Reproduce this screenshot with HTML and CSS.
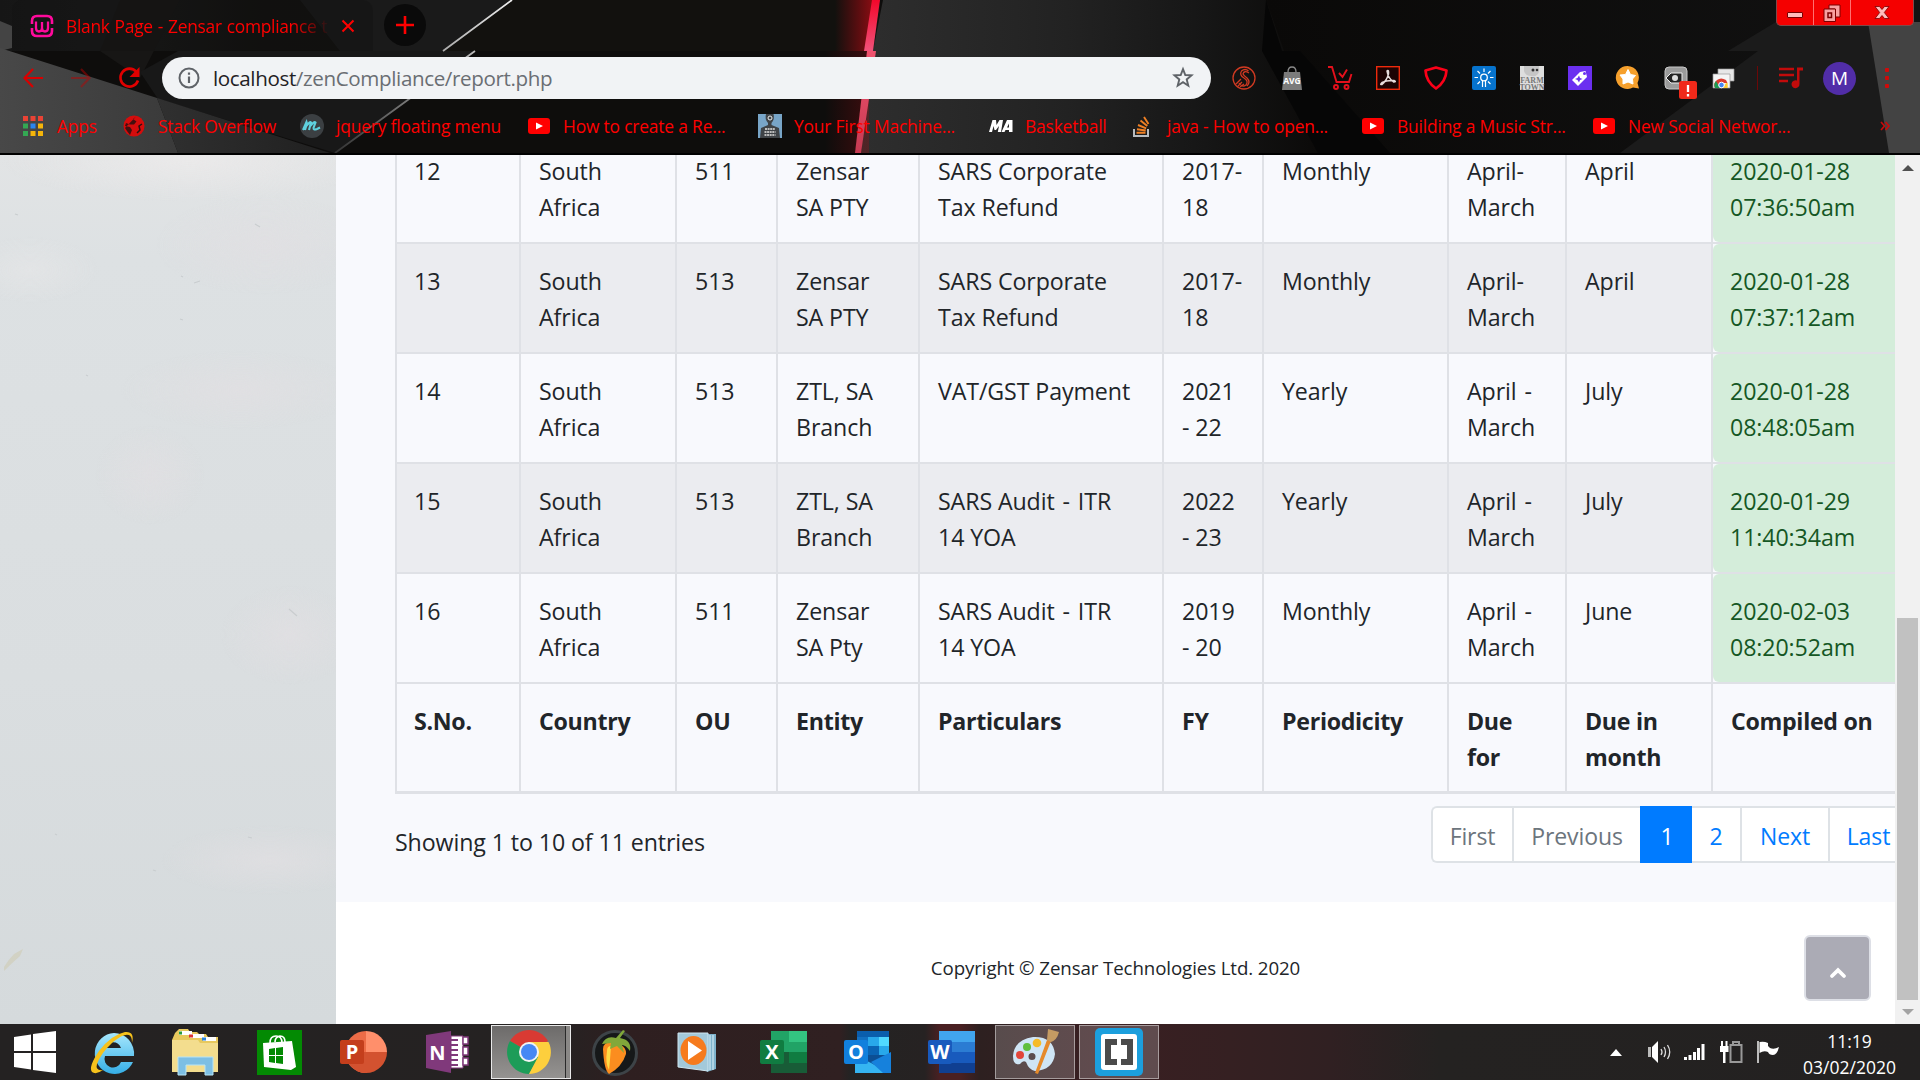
FILE: index.html
```html
<!DOCTYPE html>
<html lang="en">
<head>
<meta charset="utf-8">
<title>Blank Page - Zensar compliance tool</title>
<link rel="stylesheet" href="styles.css">
</head>
<body>
<div class="screen">
  <header class="browser">
    <svg class="theme" viewBox="0 0 1920 155" width="1920" height="155" aria-hidden="true">
      <defs>
        <linearGradient id="strip" x1="0" x2="1"><stop offset="0" stop-color="#161616"/><stop offset=".12" stop-color="#1a1a1a"/><stop offset=".2" stop-color="#161615"/><stop offset=".3" stop-color="#11100e"/><stop offset=".45" stop-color="#12110e"/></linearGradient>
        <linearGradient id="glow" x1="0" x2="1"><stop offset="0" stop-color="#a00810" stop-opacity="0"/><stop offset="1" stop-color="#a80c14" stop-opacity=".8"/></linearGradient>
        <linearGradient id="glow2" x1="0" x2="1"><stop offset="0" stop-color="#a00810" stop-opacity="0"/><stop offset="1" stop-color="#a80c14" stop-opacity=".3"/></linearGradient>
        <linearGradient id="mid" x1="0" x2="1"><stop offset="0" stop-color="#2e2e2e"/><stop offset=".45" stop-color="#222"/><stop offset=".75" stop-color="#161616"/><stop offset="1" stop-color="#0b0a09"/></linearGradient>
        <linearGradient id="beam" x1="0" x2="0" y1="0" y2="1"><stop offset="0" stop-color="#f3082b"/><stop offset="1" stop-color="#f0527a"/></linearGradient>
        <linearGradient id="beam2" x1="0" x2="0" y1="0" y2="1"><stop offset="0" stop-color="#f0526e"/><stop offset="1" stop-color="#c63a52"/></linearGradient>
        <linearGradient id="ray" x1="1" x2="0" y1="0" y2="1"><stop offset="0" stop-color="#eee"/><stop offset="1" stop-color="#333"/></linearGradient>
        <linearGradient id="slab" x1="0" x2="1"><stop offset="0" stop-color="#484848"/><stop offset="1" stop-color="#3a3a3a"/></linearGradient>
        <linearGradient id="slab2" x1="0" x2="1"><stop offset="0" stop-color="#303030"/><stop offset="1" stop-color="#202020"/></linearGradient>
        <linearGradient id="east" x1="0" x2="1"><stop offset="0" stop-color="#0a0908"/><stop offset="1" stop-color="#121212"/></linearGradient>
      </defs>
      <rect width="1920" height="155" fill="#0e0d0c"/>
      <rect width="880" height="51" fill="url(#strip)"/>
      <path d="M0 21L12 26V48L0 51Z" fill="#444"/>
      <path d="M300 0H512L443 51H340Z" fill="#1a1a1a"/>
      <path d="M120 0H180L140 78L100 51Z" fill="#171615"/>
      <path d="M178 51H475L335 153L158 99L140 72Z" fill="#181818"/>
      <path d="M0 48L157 98L178 153H0Z" fill="url(#slab)"/>
      <path d="M157 98L330 153H178Z" fill="url(#slab2)"/>
      <path d="M512 0L443 51M475 51L335 153" stroke="url(#ray)" stroke-width="1.800"/>
      <path d="M883 0H1270L1320 153H861L873 51Z" fill="url(#mid)"/>
      <rect x="835" width="38" height="51" fill="url(#glow)"/>
      <rect x="825" y="51" width="44" height="102" fill="url(#glow2)"/>
      <path d="M872 0H880L873 51H864Z" fill="url(#beam)"/>
      <path d="M867 51H876L861 153H855Z" fill="url(#beam2)"/>
      <path d="M1266 0H1920V153H1320Z" fill="url(#east)"/>
      <path d="M1266 0L1282 51H1300L1390 153H1318L1262 51Z" fill="#060606"/>
      <path d="M1776 22L1728 51H1874L1868 22ZM1758 51L1620 153H1890L1874 51Z" fill="#1b1b1b"/>
      <path d="M1868 22H1920V153H1889Z" fill="#434343"/>
      <rect y="153" width="1920" height="2" fill="#000"/>
    </svg>

    <div class="tabstrip">
      <div class="tab">
        <svg class="favicon" viewBox="0 0 24 24" width="24" height="24"><g fill="none" stroke="#ff0a9c" stroke-width="2.6"><path d="M2 10V7Q2 2 7 2H17Q22 2 22 7V10M2 14V17Q2 22 7 22H17Q22 22 22 17V14"/><path d="M6 7.500V14Q6 17.500 9 17.500Q12 17.500 12 14V8M12 14Q12 17.500 15 17.500Q18 17.500 18 14V7.500" stroke-width="2.300"/></g></svg>
        <span class="tab-title">Blank Page - Zensar compliance t</span>
        <svg class="tab-close" viewBox="0 0 14 14" width="14" height="14"><path d="M1.500 1.500L12.500 12.500M12.500 1.500L1.500 12.500" stroke="#f00" stroke-width="2"/></svg>
      </div>
      <div class="newtab"><svg viewBox="0 0 18 18" width="18" height="18"><path d="M9 0V18M0 9H18" stroke="#f00" stroke-width="2.600"/></svg></div>
      <div class="winbtns">
        <span class="wb min"><i></i></span>
        <span class="wb max"><svg viewBox="0 0 20 20" width="20" height="20"><path d="M7 2H18V14H13V6H7Z" fill="#f9a0a0" stroke="#7a0000"/><path d="M2 6H13.500V18.500H2Z" fill="#f9a0a0" stroke="#7a0000"/><path d="M6 10H9.500V14.500H6Z" fill="#f9a0a0" stroke="#7a0000" stroke-width="1.500"/></svg></span>
        <span class="wb close"><svg viewBox="0 0 16 14" width="16" height="15"><path d="M1 1H5.500L8 4L10.500 1H15L10.300 7L15 13H10.500L8 10L5.500 13H1L5.700 7Z" fill="#fbb" stroke="#700" stroke-width=".8"/></svg></span>
      </div>
    </div>

    <div class="toolbar">
      <div class="nav">
        <svg viewBox="0 0 24 24" width="24" height="24"><path d="M22 12H4M12 3L3.500 12L12 21" fill="none" stroke="#d80000" stroke-width="2.200"/></svg>
        <svg viewBox="0 0 24 24" width="24" height="24"><path d="M2 12H20M12 3L20.500 12L12 21" fill="none" stroke="#c00000" stroke-opacity=".45" stroke-width="2.200"/></svg>
        <svg viewBox="0 0 24 24" width="24" height="24"><path d="M19.500 6A9 9 0 1 0 21 14.500" fill="none" stroke="#e00000" stroke-width="2.600"/><path d="M22.500 1V11H12.500Z" fill="#e00000"/></svg>
      </div>
      <div class="omnibox">
        <svg viewBox="0 0 22 22" width="22" height="22"><circle cx="11" cy="11" r="9.500" fill="none" stroke="#5f6368" stroke-width="2"/><path d="M11 9.500V16M11 5.500V7.800" stroke="#5f6368" stroke-width="2.200"/></svg>
        <span class="url"><b>localhost</b>/zenCompliance/report.php</span>
        <svg viewBox="0 0 24 24" width="24" height="24"><path d="M12 3.200L14.300 9L20.500 9.400L15.700 13.400L17.300 19.700L12 16.200L6.700 19.700L8.300 13.400L3.500 9.400L9.700 9Z" fill="none" stroke="#5f6368" stroke-width="1.900"/></svg>
      </div>
      <div class="exts">
        <svg viewBox="0 0 24 24"><g fill="none" stroke="#d03a22" stroke-width="1.300"><circle cx="12" cy="12" r="11"/><path d="M16.500 5Q13 2 9.500 5Q7 9 12 12Q17 15 14 19Q10 22 7 17M17 7Q12 4 11 8Q12 10 15 12Q19 16 15 20M4 18L9 13M6 20L10 16M8 21L12 18"/></g></svg>
        <svg viewBox="0 0 24 24"><path d="M4 6H20L22 24H2Z" fill="#7b7b7b"/><path d="M8 6Q8 1 12 1Q16 1 16 6" fill="none" stroke="#8a8a8a" stroke-width="1.300"/><text x="12" y="17.500" class="avg">AVG</text></svg>
        <svg viewBox="0 0 24 24"><g fill="none" stroke="#e5101c" stroke-width="1.900"><path d="M0 1H4L8.500 16H21L23.500 8M11 7L14.500 11L19 3.500"/><circle cx="8" cy="21" r="2"/><circle cx="18.500" cy="21" r="2"/></g></svg>
        <svg viewBox="0 0 24 24"><rect x=".7" y=".7" width="22.600" height="22.600" fill="#1d0303" stroke="#ee2a0c" stroke-width="1.400"/><path d="M11 5Q13 3 12.500 8Q11 14 6 18.500Q3.500 19 6 16.500Q11 14 18 14.500Q21 16 17.500 16Q12 12 11 5Z" fill="none" stroke="#e8dcdc" stroke-width="1.500"/></svg>
        <svg viewBox="0 0 24 24"><path d="M12 1.500L22.500 4.500Q22 15.500 12 22.500Q2 15.500 1.500 4.500Z" fill="none" stroke="#fa0018" stroke-width="2.700" stroke-linejoin="round"/></svg>
        <svg viewBox="0 0 24 24"><rect width="24" height="24" rx="2" fill="#0673cd"/><circle cx="12" cy="11.500" r="3.300" fill="none" stroke="#fff" stroke-width="1.300"/><path d="M12 2.500V6M5.500 5L8 7.500M18.500 5L16 7.500M2.500 11.500H6M18 11.500H21.500M5.500 18L8 15.500M18.500 18L16 15.500M10.500 15V21M13.500 15V21" stroke="#fff" stroke-width="1.200"/></svg>
        <svg viewBox="0 0 24 24"><rect width="24" height="24" fill="#dedede"/><path d="M4 0H19V6Q17 11 12 10Q5 10 4 5Z" fill="#c5c5c5"/><circle cx="13" cy="4" r="1.500" fill="#333"/><circle cx="17" cy="4" r="1.300" fill="#333"/><text x="12" y="17" class="farm">FARM</text><text x="12" y="24" class="farm">TOWN</text></svg>
        <svg viewBox="0 0 24 24"><rect width="24" height="24" fill="#6b2ff0"/><path d="M17.500 5L19 11L10 20L4 14L12 6Z" fill="#fff"/><circle cx="16.500" cy="7.500" r="1.500" fill="#6b2ff0"/><path d="M11 9.500L12 12L14.500 13L12 14L11 16.500L9.500 14L7 13L9.500 12Z" fill="#6b2ff0"/></svg>
        <svg viewBox="0 0 24 24"><path d="M11.500 0A11.500 11.500 0 1 0 17 21.500L23 22.500L21.500 17A11.500 11.500 0 0 0 11.500 0Z" fill="#f6a02c"/><path d="M12 3.500L14.500 8.500L19.500 9.500L16.500 13L17 18L12 16L7 18L7 13L4 9L9.500 8.500Z" fill="#fff" stroke="#fff" stroke-linejoin="round"/></svg>
        <svg viewBox="0 0 24 24"><rect x="1" y="1" width="22" height="22" rx="4" fill="#9b9b9b" stroke="#c8c8c8"/><path d="M2 12L7 7H18V17H7Z" fill="#222" stroke="#eee"/><circle cx="11" cy="12" r="3" fill="#ddd"/><rect x="15" y="15" width="18" height="18" rx="2.500" fill="#f0291a"/><path d="M24 19V26M24 28V30.500" stroke="#fff" stroke-width="2.300"/></svg>
        <svg viewBox="0 0 24 24"><path d="M6 3H22V15H6Z" fill="#e7e7e7" stroke="#999" stroke-width=".7"/><path d="M1 8H18V22H1Z" fill="#f5f5f5" stroke="#999" stroke-width=".7"/><path d="M3 22A6.500 6.500 0 0 1 5 14Q9 11 14 14L15.500 17H10Z" fill="#dc3c30"/><path d="M3 22A6.500 6.500 0 0 1 4 15L8 22Z" fill="#1b9b51"/><path d="M11 22L14 17H15.700V22Z" fill="#fc3"/><circle cx="9.500" cy="19" r="2.800" fill="#4387f5" stroke="#fff"/></svg>
      </div>
      <i class="tb-sep"></i>
      <svg class="queue" viewBox="0 0 24 24" width="24" height="24"><path d="M0 3H15M0 9H15M0 15H9" stroke="#c20b0b" stroke-width="2.500"/><path d="M18 1.500H24V4.500H20.500V18A4 4 0 1 1 18 14.500Z" fill="#c20b0b"/></svg>
      <span class="avatar">M</span>
      <svg class="dots" viewBox="0 0 6 20" width="6" height="20"><g fill="#d00a0a"><rect x="1" y="0" width="4" height="4" rx="1"/><rect x="1" y="8" width="4" height="4" rx="1"/><rect x="1" y="16" width="4" height="4" rx="1"/></g></svg>
    </div>

    <nav class="bookmarks">
      <a class="bm bm-apps"><svg viewBox="0 0 24 24" width="24" height="24"><path d="M2 2H7V7H2ZM9.500 2H14.500V7H9.500ZM17 2H22V7H17Z" fill="#ea4335"/><path d="M2 9.500H7V14.500H2ZM2 17H7V22H2Z" fill="#34a853"/><path d="M9.500 9.500H14.500V14.500H9.500Z" fill="#2a85f0"/><path d="M17 9.500H22V14.500H17ZM9.500 17H14.500V22H9.500ZM17 17H22V22H17Z" fill="#f5b50a"/></svg><span>Apps</span></a>
      <a class="bm bm-so"><svg viewBox="0 0 24 24" width="24" height="24"><circle cx="12" cy="12" r="10.500" fill="#d50c0c"/><path d="M14 2.500L11 5L14.500 7.500L12 10.500H8L4 9L3 12L8 13L10 16L8 21L5 17L3 14Z" fill="#2a1010" opacity=".85"/><path d="M20 10L17 12L18 16L15 19" fill="none" stroke="#2a1010" stroke-width="1.500"/></svg><span>Stack Overflow</span></a>
      <a class="bm bm-jq"><svg viewBox="0 0 24 24" width="24" height="24"><circle cx="12" cy="12" r="12" fill="#3b3f42"/><path d="M3 16L6.500 8L7 9.500L5 16M6.500 12Q10 7 11 8.500L9 16M10.500 12Q14 7 15.500 8.500L13.500 14Q13.500 16.500 17 15L20 13.500" fill="none" stroke="#5fd0de" stroke-width="2.100"/></svg><span>jquery floating menu</span></a>
      <a class="bm bm-yt1"><svg viewBox="0 0 24 24" width="24" height="24"><rect x="1" y="4" width="22" height="16" rx="3" fill="#f00"/><path d="M9 8.500V15.500L16 12Z" fill="#fff"/></svg><span>How to create a Re...</span></a>
      <a class="bm bm-ml"><svg viewBox="0 0 24 24" width="24" height="24"><rect width="24" height="24" fill="#78a5c8"/><path d="M8 0H15.500Q17 5 13.500 9V11L21 14L22 24H2L3 14L10 11V9Q6.500 5 8 0Z" fill="#3f4347"/><circle cx="12" cy="4" r="2" fill="none" stroke="#eee"/><path d="M7 15H17M6.500 18H17.500M6.500 21H17.500" stroke="#bbb" stroke-width="1.800" stroke-dasharray="2 .6"/></svg><span>Your First Machine...</span></a>
      <a class="bm bm-ma"><svg viewBox="0 0 24 24" width="24" height="24"><path d="M0 18L3.500 6H7L7.500 11L10.500 6H14L12 18H8.800L10 12L7 16H5.500L4.500 12L3 18ZM12.500 18L18 6H23.500V18H20V16H16.500L15.500 18ZM18 13.500H20V9.500Z" fill="#fff"/></svg><span>Basketball</span></a>
      <a class="bm bm-java"><svg viewBox="0 0 24 24" width="24" height="24"><path d="M3 15V22H17V15" fill="none" stroke="#b8bcc0" stroke-width="2"/><path d="M5.500 18.700H14.500M6 15.200L14.700 16.500M7 11L15.200 14.300M9.500 6.500L16.300 12M13 3L17.500 10" stroke="#f08024" stroke-width="1.900"/></svg><span>java - How to open...</span></a>
      <a class="bm bm-yt2"><svg viewBox="0 0 24 24" width="24" height="24"><rect x="1" y="4" width="22" height="16" rx="3" fill="#f00"/><path d="M9 8.500V15.500L16 12Z" fill="#fff"/></svg><span>Building a Music Str...</span></a>
      <a class="bm bm-yt3"><svg viewBox="0 0 24 24" width="24" height="24"><rect x="1" y="4" width="22" height="16" rx="3" fill="#f00"/><path d="M9 8.500V15.500L16 12Z" fill="#fff"/></svg><span>New Social Networ...</span></a>
      <svg class="more" viewBox="0 0 10 10" width="10" height="10"><path d="M1 1L4.500 5L1 9M5.500 1L9 5L5.500 9" fill="none" stroke="#c60b0b" stroke-width="1.700"/></svg>
    </nav>
  </header>

  <main class="viewport">
    <aside class="wall">
      <svg viewBox="0 0 336 869" width="336" height="869" aria-hidden="true">
        <defs><radialGradient id="pink"><stop offset="0" stop-color="#e1dfe2"/><stop offset="1" stop-color="#e1dfe2" stop-opacity="0"/></radialGradient><radialGradient id="light"><stop offset="0" stop-color="#edebeb"/><stop offset="1" stop-color="#edebeb" stop-opacity="0"/></radialGradient></defs>
        <g opacity=".75"><ellipse cx="190" cy="5" rx="190" ry="42" fill="url(#light)"/><ellipse cx="30" cy="115" rx="70" ry="34" fill="url(#light)" opacity=".5"/>
        <ellipse cx="265" cy="90" rx="110" ry="50" fill="url(#pink)"/><ellipse cx="240" cy="235" rx="120" ry="40" fill="url(#pink)"/><ellipse cx="150" cy="320" rx="55" ry="50" fill="url(#pink)"/><ellipse cx="290" cy="480" rx="70" ry="50" fill="url(#pink)"/><ellipse cx="270" cy="705" rx="110" ry="35" fill="url(#pink)"/></g>
        <path d="M255 69L260 72M181 121L183 122M194 128L200 126M180 164L183 165M86 220L88 221M289 454L297 461M15 59L18 60M55 679L57 680M153 715L156 716M248 682L252 683" stroke="#c9cdcf" stroke-width="1.200"/>
        <path d="M4 812Q9 804 14 799L23 794L20 801Q12 808 4 816Z" fill="#cfccb4" opacity=".6"/>
      </svg>
    </aside>
    <section class="page">
      <div class="content">
        <table class="report">
          <colgroup><col class="c1"><col class="c2"><col class="c3"><col class="c4"><col class="c5"><col class="c6"><col class="c7"><col class="c8"><col class="c9"><col class="c10"></colgroup>
          <tbody>
            <tr><td>12</td><td>South<br>Africa</td><td>511</td><td>Zensar<br>SA PTY</td><td>SARS Corporate<br>Tax Refund</td><td>2017-<br>18</td><td>Monthly</td><td>April-<br>March</td><td>April</td><td class="done"><div>2020-01-28<br>07:36:50am</div></td></tr>
            <tr class="odd"><td>13</td><td>South<br>Africa</td><td>513</td><td>Zensar<br>SA PTY</td><td>SARS Corporate<br>Tax Refund</td><td>2017-<br>18</td><td>Monthly</td><td>April-<br>March</td><td>April</td><td class="done"><div>2020-01-28<br>07:37:12am</div></td></tr>
            <tr><td>14</td><td>South<br>Africa</td><td>513</td><td>ZTL, SA<br>Branch</td><td>VAT/GST Payment</td><td>2021<br>- 22</td><td>Yearly</td><td>April <i>-</i><br>March</td><td>July</td><td class="done"><div>2020-01-28<br>08:48:05am</div></td></tr>
            <tr class="odd"><td>15</td><td>South<br>Africa</td><td>513</td><td>ZTL, SA<br>Branch</td><td>SARS Audit <i>-</i> ITR<br>14 YOA</td><td>2022<br>- 23</td><td>Yearly</td><td>April <i>-</i><br>March</td><td>July</td><td class="done"><div>2020-01-29<br>11:40:34am</div></td></tr>
            <tr><td>16</td><td>South<br>Africa</td><td>511</td><td>Zensar<br>SA Pty</td><td>SARS Audit <i>-</i> ITR<br>14 YOA</td><td>2019<br>- 20</td><td>Monthly</td><td>April <i>-</i><br>March</td><td>June</td><td class="done"><div>2020-02-03<br>08:20:52am</div></td></tr>
          </tbody>
          <tfoot>
            <tr><th>S.No.</th><th>Country</th><th>OU</th><th>Entity</th><th>Particulars</th><th>FY</th><th>Periodicity</th><th>Due<br>for</th><th>Due in<br>month</th><th>Compiled on</th></tr>
          </tfoot>
        </table>
        <div class="table-foot">
          <p class="info">Showing 1 to 10 of 11 entries</p>
          <div class="pager">
            <a class="pg first off">First</a><a class="pg prev off">Previous</a><a class="pg one">1</a><a class="pg two">2</a><a class="pg next">Next</a><a class="pg last">Last</a>
          </div>
        </div>
      </div>
      <footer class="copy"><span>Copyright © Zensar Technologies Ltd. 2020</span>
        <a class="to-top"><svg viewBox="0 0 16 10" width="16" height="10"><path d="M2 8L8 2.200L14 8" fill="none" stroke="#fff" stroke-width="3.800" stroke-linecap="round"/></svg></a>
      </footer>
    </section>
    <div class="scrollbar">
      <svg viewBox="0 0 12 6" width="12" height="6"><path d="M0 6L6 0L12 6Z" fill="#505050"/></svg>
      <i class="thumb"></i>
      <svg viewBox="0 0 12 6" width="12" height="6"><path d="M0 0L6 6L12 0Z" fill="#a3a3a3"/></svg>
    </div>
  </main>

  <footer class="taskbar">
    <div class="start"><svg viewBox="0 0 42 42" width="42" height="42"><path d="M0 6L17 3.500V20H0ZM19 3L42 0V20H19ZM0 22H17V38.500L0 36ZM19 22H42V42L19 39Z" fill="#fff"/></svg></div>
    <div class="slot"><svg viewBox="0 0 48 48" width="48" height="48"><defs><linearGradient id="ie" x2="0" y2="1"><stop offset="0" stop-color="#a6e7fd"/><stop offset="1" stop-color="#35aee6"/></linearGradient></defs><path d="M27 5A20 20.500 0 1 0 46 34H34A8.500 8.500 0 0 1 18 28H47A20 21 0 0 0 27 5ZM18 20A8.500 8.500 0 0 1 34 20Z" fill="url(#ie)"/><path d="M45 15Q48 3 38 4Q24 7 12 23Q1 39 5 44Q9 47 16 42Q8 43 10 36Q14 25 26 14Q37 5 42 7Q45 8 45 15Z" fill="#f6c21c"/></svg></div>
    <div class="slot"><svg viewBox="0 0 48 48" width="48" height="48"><path d="M4 5L8 1H17L19 4H26L28 6H35L37 9H47V42H1V12Z" fill="#e8c95e"/><path d="M8 3H21V7H8ZM19 6H33V10H19ZM32 9H45V13H32Z" fill="#fff"/><path d="M8 3.500H11V6.500H8Z" fill="#2b9b3a"/><path d="M18 6.500H22V9.500H18Z" fill="#d33"/><path d="M31 9.500H35V12.500H31Z" fill="#2b83d8"/><path d="M1 12H27L29 15H47V44H1Z" fill="#f3dd8e"/><path d="M7 29H42V47H34V37H15V47H7Z" fill="#7dbfe4" stroke="#b8e4f6"/></svg></div>
    <div class="slot"><svg viewBox="0 0 45 45" width="45" height="45"><rect width="45" height="45" fill="#038a03"/><path d="M6 13L35 11L39 37L34 40L7 37Z" fill="#fff"/><path d="M13 13Q13 6 19 6Q25 6 25 13M18 12Q18 7 23 6Q28 6 28 12" fill="none" stroke="#fff" stroke-width="1.600"/><path d="M12 19L18 18V25H12ZM19 18L26 17V25H19ZM12 26H18V33L12 32ZM19 26H26V34L19 33Z" fill="#038a03"/></svg></div>
    <div class="slot"><svg viewBox="0 0 48 44" width="48" height="44"><path d="M27 1A21 21 0 0 0 27 43V22Z" fill="#ed6c47"/><path d="M27 1A21 21 0 0 1 48 22H27Z" fill="#ff8f6b"/><path d="M6 22H48A21 21 0 0 1 6 22Z" fill="#d35230"/><rect x="1" y="10" width="24" height="24" rx="2" fill="#c43e1c"/><text x="13" y="29" class="office">P</text></svg></div>
    <div class="slot"><svg viewBox="0 0 44 44" width="44" height="44"><path d="M1 5L26 1V43L1 38Z" fill="#80397b"/><path d="M26 6H38V38H26Z" fill="#fff" stroke="#80397b"/><path d="M25 10H33M25 15H33M25 20H33M25 25H33M25 30H33M25 35H33" stroke="#80397b" stroke-width="2"/><path d="M38 7H43V14H38ZM38 17H43V25H38ZM38 28H43V35H38Z" fill="#fff" stroke="#80397b" stroke-width="1.500"/><text x="12.500" y="30" class="office">N</text></svg></div>
    <div class="slot"><div class="open active stack"><svg viewBox="0 0 44 44" width="44" height="44"><path d="M22 22L3 11A22 22 0 0 1 41 11Z" fill="#d93a33"/><path d="M22 22L3 11A22 22 0 0 0 22 44L31.500 27Z" fill="#1d9c58"/><path d="M22 12H41.500A22 22 0 0 1 22 44L31 27Z" fill="#fdcf3d"/><circle cx="22" cy="22" r="10" fill="#f3f3f3"/><circle cx="22" cy="22" r="8" fill="#4687f4"/></svg></div></div>
    <div class="slot"><svg viewBox="0 0 46 46" width="46" height="46"><circle cx="23" cy="24" r="21.500" fill="#161819" stroke="#3d4347" stroke-width="3"/><path d="M11 20Q11 13 20 13Q35 16 34 25Q30 38 17 45Q12 41 11 20Z" fill="#fb8d1f"/><path d="M15 22Q15 17 19 17Q18 32 17 41Q13 34 15 22Z" fill="#ffdb45"/><path d="M10 15Q14 6 24 9L31 1L33 2L28 9Q40 11 38 22Q34 16 30 16L32 24L25 17L18 20L19 14Z" fill="#81a83a"/></svg></div>
    <div class="slot nudge-l"><svg viewBox="0 0 40 40" width="40" height="40"><path d="M8 2H39V37L30 40Z" fill="#7fb3cc"/><path d="M33 3V38M36 3V38" stroke="#e3f3fa"/><path d="M1 1H31V39L1 35Z" fill="#a3c9da" stroke="#cfe5ef"/><ellipse cx="16.500" cy="18.500" rx="13" ry="14.500" fill="#f67b1e"/><path d="M11 9V28L25 18.500Z" fill="#fff"/></svg></div>
    <div class="slot"><svg viewBox="0 0 48 44" width="48" height="44"><path d="M12 1H30V22H12Z" fill="#21a366"/><path d="M30 1H48V12H30Z" fill="#33c481"/><path d="M30 12H48V22H30Z" fill="#21a366"/><path d="M12 22H30V33H12Z" fill="#185c37"/><path d="M30 22H48V33H30Z" fill="#107c41"/><path d="M12 33H48V43H12Z" fill="#185c37"/><rect x="1" y="10" width="24" height="24" rx="2" fill="#107c41"/><text x="13" y="29" class="office">X</text></svg></div>
    <div class="slot"><svg viewBox="0 0 48 44" width="48" height="44"><path d="M14 1H46V7H14Z" fill="#0a5eac"/><path d="M14 7H25V16H14Z" fill="#1270c0"/><path d="M25 7H36V16H25Z" fill="#28a8ea"/><path d="M36 7H46V16H36Z" fill="#50d9ff"/><path d="M25 16H36V25H25Z" fill="#0a64b4"/><path d="M36 16H46V25H36Z" fill="#28a8ea"/><path d="M12 25H46L28 36Z" fill="#0c4f94"/><path d="M12 25L48 43H12Z" fill="#35b5f2"/><path d="M48 22V43H40L28 32Z" fill="#1681dc"/><rect x="1" y="10" width="24" height="24" rx="2" fill="#1180dd"/><text x="13" y="29" class="office">O</text></svg></div>
    <div class="slot"><svg viewBox="0 0 48 44" width="48" height="44"><path d="M12 1H48V12H12Z" fill="#41a5ee"/><path d="M12 12H48V22H12Z" fill="#2b7cd3"/><path d="M12 22H48V33H12Z" fill="#185abd"/><path d="M12 33H48V43H12Z" fill="#103f91"/><rect x="1" y="10" width="24" height="24" rx="2" fill="#185abd"/><text x="13" y="29" class="office">W</text></svg></div>
    <div class="slot"><div class="open"><svg viewBox="0 0 48 48" width="48" height="48"><path d="M22 9Q42 8 44 26Q42 42 24 43Q18 42 15 34Q12 32 9 36Q2 38 2 28Q3 12 22 9ZM21 25A3 3 0 1 0 21 32A3 3 0 1 0 21 25Z" fill="#cfe5f5" fill-rule="evenodd"/><circle cx="9" cy="27" r="4" fill="#e1453a"/><circle cx="16" cy="19" r="4" fill="#5fbf3d"/><circle cx="26" cy="15" r="4.300" fill="#f6bb28"/><path d="M36 12L40 13L27 46L24 45Z" fill="#e58a2b"/><path d="M37 1L48 4Q46 12 40 14L36 12Z" fill="#c59b63"/></svg></div></div>
    <div class="slot"><div class="open"><svg viewBox="0 0 48 48" width="48" height="48"><rect width="48" height="48" rx="5" fill="#1c9fdd"/><rect x="6" y="6" width="36" height="36" rx="3" fill="#fff"/><path d="M10 11H22V17H16V31H22V37H10ZM38 11H26V17H32V31H26V37H38Z" fill="#4b4b4b"/></svg></div></div>
    <div class="tray">
      <svg class="t-up" viewBox="0 0 12 7" width="12" height="7"><path d="M0 7L6 0L12 7Z" fill="#fff"/></svg>
      <svg class="t-vol" viewBox="0 0 24 22" width="24" height="22"><path d="M0 6H3V16H0Z" fill="#bbb"/><path d="M4 6L10 0V22L4 16Z" fill="#fff"/><path d="M13 8Q15 11 13 14M16 6Q19 11 16 16M19.500 4Q24 11 19.500 18" fill="none" stroke="#ddd" stroke-width="1.300"/></svg>
      <svg class="t-net" viewBox="0 0 21 16" width="21" height="16"><path d="M0 13H3V16H0ZM4.500 11H7.500V16H4.500ZM9 8H12V16H9ZM13 4H16V16H13ZM17.500 0H20.500V16H17.500Z" fill="#fff"/></svg>
      <svg class="t-bat" viewBox="0 0 23 22" width="23" height="22"><path d="M1 0H3V5H5.500V0H7.500V5H8.500V11H5.500V22H3V11H0V5H1Z" fill="#fff"/><path d="M10.500 4H21.500V21H10.500ZM13 4V1H19V4" fill="none" stroke="#999" stroke-width="2"/></svg>
      <svg class="t-flag" viewBox="0 0 22 22" width="22" height="22"><path d="M1 0V22" stroke="#fff" stroke-width="1.400"/><path d="M2.500 1Q7 0 11 2V5L13 7Q17 9 22 6Q20 14 16 14Q12 14 11 11Q7 9 2.500 12Z" fill="#fff"/></svg>
      <div class="clock"><span>11:19</span><span>03/02/2020</span></div>
    </div>
  </footer>
</div>
</body>
</html>
```
FILE: styles.css
```css
* { box-sizing: border-box; }
html, body { margin: 0; height: 100%; overflow: hidden; }
body { font-family: "Open Sans", "Noto Sans", sans-serif; }
svg { display: block; flex: none; overflow: visible; }
.screen { width: 1920px; height: 1080px; display: flex; flex-direction: column; overflow: hidden; }

/* browser chrome */
.browser { position: relative; height: 155px; flex: none; background: #0e0d0c; color: #f00; display: flex; flex-direction: column; }
.theme { position: absolute; left: 0; top: 0; }
.tabstrip, .toolbar, .bookmarks { position: relative; display: flex; flex: none; }
.tabstrip { height: 51px; align-items: flex-start; }
.tab { width: 361px; height: 51px; margin-left: 12px; padding-left: 18px; display: flex; align-items: center; border-radius: 10px 10px 0 0; background: rgba(18, 17, 16, .35); }
.tab-title { width: 268px; margin-left: 12px; font-size: 17.4px; letter-spacing: -.3px; word-spacing: .8px; white-space: nowrap; overflow: hidden; -webkit-mask-image: linear-gradient(90deg, #000 225px, transparent 264px); mask-image: linear-gradient(90deg, #000 225px, transparent 264px); }
.tab-close { margin-left: 7px; }
.newtab { width: 42px; height: 42px; margin: 4px 0 0 11px; border-radius: 50%; background: #0a0a0a; display: flex; align-items: center; justify-content: center; }
.winbtns { margin-left: auto; margin-right: 6px; width: 138px; height: 26px; display: flex; background: #f50000; border: 1px solid #7d4a4a; border-top: 0; border-radius: 0 0 5px 5px; }
.wb { display: flex; align-items: center; justify-content: center; }
.wb + .wb { border-left: 1px solid #ff7070; }
.min { width: 36px; }
.min i { width: 16px; height: 6px; margin-top: 5px; background: #fbb; border: 1px solid #700; border-radius: 1px; }
.max { width: 37px; }
.close { flex: 1; }
.toolbar { height: 54px; align-items: center; }
.nav { width: 162px; padding-left: 21px; display: flex; gap: 24px; }
.omnibox { width: 1049px; height: 42px; border-radius: 21px; background: #f1f3f5; display: flex; align-items: center; padding: 0 16px 0 16px; }
.url { flex: 1; margin-left: 13px; font-size: 20.6px; letter-spacing: -.38px; color: #6a6e73; white-space: nowrap; }
.url b { font-weight: 400; color: #1f2124; }
.exts { display: flex; gap: 24px; margin-left: 21px; }
.exts svg { width: 24px; height: 24px; }
.avg { font: 700 8.500px "Open Sans", sans-serif; fill: #fff; text-anchor: middle; }
.farm { font: 700 8px "Liberation Serif", serif; fill: #777; text-anchor: middle; }
.tb-sep { width: 1px; height: 24px; margin-left: 21px; background: #6c0808; }
.queue { margin-left: 21px; }
.avatar { width: 33px; height: 33px; margin-left: 20px; border-radius: 50%; background: #512da8; color: #fff; font-size: 19px; line-height: 32px; text-align: center; }
.dots { margin-left: 28px; }
.bookmarks { height: 42px; padding: 0 0 1px 21px; align-items: center; }
.bm { display: flex; align-items: center; gap: 12px; font-size: 17.4px; letter-spacing: -.18px; white-space: nowrap; flex: none; }
.bm-apps { width: 101px; }
.bm-so { width: 178px; }
.bm-jq { width: 227px; }
.bm-yt1 { width: 231px; }
.bm-ml { width: 231px; }
.bm-ma { width: 142px; }
.bm-java { width: 230px; }
.bm-yt2 { width: 231px; }
.bm-yt3 { width: 288px; }

/* page */
.viewport { height: 869px; flex: none; display: flex; overflow: hidden; }
.wall { width: 336px; flex: none; background: linear-gradient(#e2e4e5, #dde1e3 12%, #dadee0 60%, #d5dadc); }
.page { width: 1559px; flex: none; display: flex; flex-direction: column; overflow: hidden; background: #fff; position: relative; }
.content { height: 747px; flex: none; background: #f8f9fd; padding-left: 59px; display: flex; flex-direction: column; justify-content: flex-end; overflow: hidden; }
.report { width: 1520px; table-layout: fixed; border-spacing: 0; flex: none; color: #212529; font-size: 23.2px; line-height: 36px; letter-spacing: -.1px; white-space: nowrap; }
.c1 { width: 124px; } .c2 { width: 156px; } .c3 { width: 101px; } .c4 { width: 142px; } .c5 { width: 244px; }
.c6 { width: 100px; } .c7 { width: 185px; } .c8 { width: 118px; } .c9 { width: 146px; } .c10 { width: 204px; }
td, th { height: 110px; padding: 19px 0 0 18px; vertical-align: top; text-align: left; border-left: 2px solid #dfe1e6; border-bottom: 2px solid #dfe1e6; }
td:first-child, th:first-child { padding-left: 17px; }
td i { font-style: normal; margin: 0 2px; }
th { font-weight: 700; letter-spacing: -.3px; border-bottom-width: 3px; }
.odd td { background: #ebecf0; }
td.done, .odd td.done { padding: 0; background: #f8f9fd; }
.done div { height: 108px; padding: 19px 0 0 17px; border-radius: 6px; background: #d4edda; color: #155724; }
.table-foot { height: 108px; flex: none; display: flex; justify-content: space-between; }
.info { margin: 30px 0 0; font-size: 23.2px; line-height: 36px; letter-spacing: -.1px; color: #212529; white-space: nowrap; }
.pager { height: 57px; width: 464px; margin-top: 12px; display: flex; flex: none; font-size: 23px; line-height: 57px; letter-spacing: -.1px; color: #007bff; }
.pg { flex: none; border: 2px solid #dee2e6; border-right: 0; background: #fff; text-align: center; white-space: nowrap; }
.off { color: #6c757d; }
.first { width: 81px; border-radius: 6px 0 0 6px; }
.prev { width: 128px; }
.one { width: 52px; background: #007bff; border-color: #007bff; color: #fff; }
.two { width: 48px; border-left: 0; }
.next { width: 88px; }
.last { width: 79px; }
.copy { flex: 1; display: flex; justify-content: center; align-items: center; font-size: 18.7px; letter-spacing: -.1px; color: #212529; padding-top: 9px; }
.to-top { position: absolute; right: 24px; bottom: 23px; width: 67px; height: 66px; border: 2px solid #dddfe6; border-radius: 6px; background: #ababb5; display: flex; justify-content: center; padding-top: 31px; }
.scrollbar { width: 25px; flex: none; background: #f1f1f1; display: flex; flex-direction: column; align-items: center; padding: 10px 0 9px; }
.thumb { width: 21px; height: 382px; margin: auto 0 9px; background: #c1c1c1; }

/* taskbar */
.taskbar { height: 56px; flex: none; display: flex; align-items: center; background: linear-gradient(90deg, #242222 0, #252222 560px, #2e1f20 620px, #302021 840px, #242323 850px, #262222 925px, #4a2022 940px, #4a2022 960px, #2d2020 980px, #3a1f22 1100px, #352022 1230px, #302022 1330px, #242221 1440px, #232121 100%); }
.start { width: 69px; padding-left: 14px; }
.slot { width: 84px; height: 56px; flex: none; display: flex; align-items: center; justify-content: center; }
.nudge-l { padding-right: 4px; }
.open { width: 80px; height: 54px; border: 1px solid rgba(255, 255, 255, .45); background: rgba(255, 255, 255, .2); display: flex; align-items: center; justify-content: center; }
.open.active { border: 1px solid #e9e9e9; background: linear-gradient(#6d6b6a, #959391); }
.stack { padding-right: 5px; box-shadow: inset -4px 0 0 #8a8886, inset -5px 0 0 #2a2a2a; }
.office { font: 700 20px "Open Sans", sans-serif; fill: #fff; text-anchor: middle; }
.tray { flex: 1; display: flex; align-items: center; padding-left: 449px; color: #fff; }
.t-vol { margin-left: 26px; }
.t-net { margin-left: 12px; }
.t-bat { margin-left: 15px; }
.t-flag { margin-left: 14px; }
.clock { flex: 1; display: flex; flex-direction: column; align-items: center; font-size: 17.5px; line-height: 26px; padding-top: 4px; margin: 0 24px; white-space: nowrap; }
```
